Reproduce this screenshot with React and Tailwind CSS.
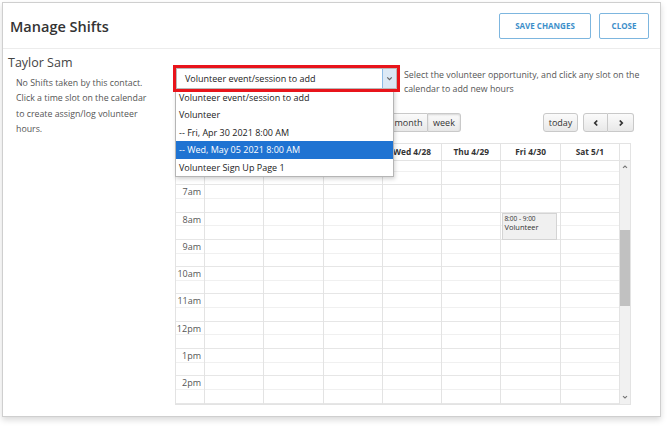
import React from "react";

const days = ["Sun 4/25", "Mon 4/26", "Tue 4/27", "Wed 4/28", "Thu 4/29", "Fri 4/30", "Sat 5/1"];
const hours = ["6am", "7am", "8am", "9am", "10am", "11am", "12pm", "1pm", "2pm", "3pm"];
const options = [
  "Volunteer event/session to add",
  "Volunteer",
  "-- Fri, Apr 30 2021 8:00 AM",
  "-- Wed, May 05 2021 8:00 AM",
  "Volunteer Sign Up Page 1",
];

const Chevron = ({ dir = "down", className = "" }) => (
  <svg viewBox="0 0 10 10" className={className} fill="none" stroke="currentColor" strokeWidth="1.4">
    {dir === "down" && <path d="M2.5 3.8 L5 6.2 L7.5 3.8" />}
    {dir === "up" && <path d="M2.5 6.2 L5 3.8 L7.5 6.2" />}
    {dir === "left" && <path d="M6.2 2.5 L3.8 5 L6.2 7.5" strokeWidth="1.8" />}
    {dir === "right" && <path d="M3.8 2.5 L6.2 5 L3.8 7.5" strokeWidth="1.8" />}
  </svg>
);

const btn = "h-[19px] border border-[#c9c9c9] bg-gradient-to-b from-[#fbfbfb] to-[#e8e8e8] text-[9px] text-[#333] flex items-center justify-center";

export default function App() {
  return (
    <div className="w-[670px] h-[427px] bg-white pt-[2px] pl-[2px] font-['Open_Sans',sans-serif] overflow-hidden">
      <div className="w-[659px] h-[415px] border border-[#cfcfcf] bg-white shadow-[0_3px_6px_rgba(0,0,0,0.15)] flex flex-col overflow-hidden">
        {/* Header */}
        <div className="h-[46px] shrink-0 border-b border-[#ececec] flex items-center justify-between pl-[7px] pr-[11px]">
          <span className="mt-[3px] text-[14.5px] font-semibold text-[#333]">Manage Shifts</span>
          <div className="flex gap-[8px]">
            <button className="w-[92px] h-[26px] border border-[#7db6df] rounded-[2px] text-[8px] font-bold text-[#3d8fca]">
              SAVE CHANGES
            </button>
            <button className="w-[50px] h-[26px] border border-[#7db6df] rounded-[2px] text-[8px] font-bold text-[#3d8fca]">
              CLOSE
            </button>
          </div>
        </div>

        {/* Body */}
        <div className="flex flex-1 min-h-0">
          <div className="w-[170px] pl-[5px] pt-[5px]">
            <div className="text-[12.5px] text-[#444] leading-[18px]">Taylor Sam</div>
            <p className="pl-[8px] pt-[4px] text-[8.8px] leading-[15.3px] text-[#555]">
              No Shifts taken by this contact.
              <br />
              Click a time slot on the calendar
              <br />
              to create assign/log volunteer
              <br />
              hours.
            </p>
          </div>

          <div className="flex-1 pt-[16px]">
            <div className="flex items-start h-[27px]">
              <div className="relative">
                <div className="relative z-20 w-[227px] h-[27px] border-[3px] border-[#e8141b] bg-white">
                  <div className="h-full border border-[#b9b9b9] flex items-center justify-between pl-[8px]">
                    <span className="text-[9px] text-[#222]">Volunteer event/session to add</span>
                    <div className="w-[14px] h-full bg-[#dce9f6] border-l border-[#8dbbe6] text-[#666] flex items-center justify-center">
                      <Chevron className="w-[9px] h-[9px]" />
                    </div>
                  </div>
                </div>
                <div className="absolute z-10 top-[23px] left-[2px] w-[219px] bg-white border border-[#b5b5b5] shadow-[1px_2px_4px_rgba(0,0,0,0.18)]">
                  {options.map((o, i) => (
                    <div
                      key={o}
                      className={`h-[17.4px] flex items-center pl-[3px] text-[9px] ${
                        i === 3 ? "bg-[#1f73d2] text-white" : "text-[#222]"
                      }`}
                    >
                      {o}
                    </div>
                  ))}
                </div>
              </div>
              <p className="ml-[4px] mt-[3px] whitespace-nowrap text-[8.8px] leading-[14px] text-[#555]">
                Select the volunteer opportunity, and click any slot on the
                <br />
                calendar to add new hours
              </p>
            </div>

            {/* Toolbar */}
            <div className="flex items-center mt-[21px] ml-[2px] w-[459px]">
              <div className="flex ml-[214px]">
                <div className={`${btn} w-[39px] rounded-l-[3px]`}>month</div>
                <div className={`${btn} w-[33px] rounded-r-[3px] border-l-0 from-[#d6d6d6] to-[#cdcdcd] shadow-[inset_0_1px_2px_rgba(0,0,0,0.15)]`}>
                  week
                </div>
              </div>
              <div className="flex-1" />
              <div className={`${btn} w-[35px] rounded-[3px]`}>today</div>
              <div className="flex ml-[5px]">
                <div className={`${btn} w-[25px] rounded-l-[3px] text-[#222]`}>
                  <Chevron dir="left" className="w-[10px] h-[10px]" />
                </div>
                <div className={`${btn} w-[26px] rounded-r-[3px] border-l-0 text-[#222]`}>
                  <Chevron dir="right" className="w-[10px] h-[10px]" />
                </div>
              </div>
            </div>

            {/* Calendar */}
            <div className="mt-[11px] ml-[2px] w-[456px] border border-[#e3e3e3]">
              <div className="flex h-[17px] border-b border-[#e3e3e3]">
                <div className="w-[29px] border-r border-[#e3e3e3]" />
                {days.map((d) => (
                  <div key={d} className="flex-1 border-r border-[#e3e3e3] flex items-center justify-center text-[8.3px] font-bold text-[#333]">
                    {d}
                  </div>
                ))}
                <div className="w-[10px]" />
              </div>
              <div className="flex h-[243px] overflow-hidden">
                <div className="flex-1 overflow-hidden">
                  <div className="mt-[-3px] flex">
                    <div className="w-[29px] border-r border-[#e3e3e3]">
                      {hours.map((h) => (
                        <div key={h} className="h-[27.3px] border-b border-[#e6e6e6]">
                          <div className="h-[13.65px] border-b border-[#f0f0f0] text-right pr-[3px] text-[9px] leading-[14px] text-[#555]">
                            {h}
                          </div>
                        </div>
                      ))}
                    </div>
                    {days.map((d, di) => (
                      <div key={d} className="relative flex-1 border-r border-[#e3e3e3]">
                        {hours.map((h) => (
                          <div key={h} className="h-[27.3px] border-b border-[#e6e6e6]">
                            <div className="h-[13.65px] border-b border-[#f0f0f0]" />
                          </div>
                        ))}
                        {di === 5 && (
                          <div className="absolute top-[55px] left-[1px] right-[3px] h-[27px] bg-[#f0f0f0] border border-[#d4d4d4] px-[1px] text-[6.5px] leading-[9px] text-[#333]">
                            <div>8:00 - 9:00</div>
                            <div className="text-[7.5px]">Volunteer</div>
                          </div>
                        )}
                      </div>
                    ))}
                  </div>
                </div>
                <div className="w-[10px] bg-[#f1f1f1] flex flex-col items-center text-[#777]">
                  <Chevron dir="up" className="w-[8px] h-[8px] mt-[2px]" />
                  <div className="w-full h-[76px] bg-[#c1c1c1] mt-[59px]" />
                  <div className="flex-1" />
                  <Chevron dir="down" className="w-[8px] h-[8px] mb-[3px]" />
                </div>
              </div>
            </div>
          </div>
        </div>
      </div>
    </div>
  );
}
